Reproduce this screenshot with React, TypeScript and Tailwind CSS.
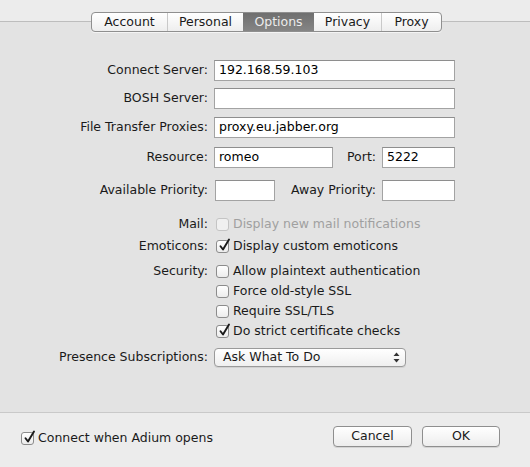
import React from 'react';

const font = { fontFamily: '"Lucida Grande", "DejaVu Sans", sans-serif' };

function Check({ checked = false, disabled = false }: { checked?: boolean; disabled?: boolean }) {
  return (
    <span
      className={`relative inline-block w-[13px] h-[13px] rounded-[3px] border shrink-0 ${
        disabled ? 'border-[#c4c4c4] bg-[#f0f0f0]' : 'border-[#8c8c8c] bg-gradient-to-b from-[#ffffff] to-[#ececec]'
      }`}
    >
      {checked && (
        <svg className="absolute left-[1px] top-[-3px]" width="13" height="14" viewBox="0 0 13 14">
          <path d="M2.5 8.2 L5 11.5 L11 1.5" fill="none" stroke="#1a1a1a" strokeWidth="1.9" strokeLinecap="round" strokeLinejoin="round" />
        </svg>
      )}
    </span>
  );
}

function Field({ value = '', w }: { value?: string; w: string }) {
  return (
    <div className={`${w} h-[21px] bg-white border border-[#a3a3a3] border-t-[#8e8e8e] flex items-center pl-[4px] text-[12.5px] text-black`}>
      {value}
    </div>
  );
}

function Label({ children }: { children?: React.ReactNode }) {
  return <div className="w-[214px] shrink-0 text-right pr-[6px] text-[12.5px] text-[#1a1a1a]">{children}</div>;
}

function CheckRow({ label, text, checked, disabled, cls }: { label?: string; text: string; checked?: boolean; disabled?: boolean; cls: string }) {
  return (
    <div className={`flex items-center h-[20px] ${cls}`}>
      <Label>{label}</Label>
      <div className="flex items-center gap-[4px] pl-[2px]">
        <Check checked={checked} disabled={disabled} />
        <span className={`text-[12.5px] ${disabled ? 'text-[#a0a0a0]' : 'text-[#1a1a1a]'}`}>{text}</span>
      </div>
    </div>
  );
}

const tabs = ['Account', 'Personal', 'Options', 'Privacy', 'Proxy'];
const tabW = ['w-[75px]', 'w-[76px]', 'w-[71px]', 'w-[67px]', 'w-[60px]'];

export default function App() {
  return (
    <div className="w-[530px] h-[467px] bg-[#ececec] flex flex-col overflow-hidden select-none" style={font}>
      <div className="relative h-[22px] shrink-0 border-b border-[#bdbdbd]">
        <div className="absolute left-[91px] top-[12px] h-[20px] flex rounded-[4px] border border-[#8f8f8f] overflow-hidden bg-gradient-to-b from-[#ffffff] to-[#eeeeee] shadow-[0_1px_0_rgba(255,255,255,0.6)]">
          {tabs.map((t, i) => (
            <div
              key={t}
              className={`${tabW[i]} flex items-center justify-center text-[12.5px] ${
                t === 'Options'
                  ? 'bg-gradient-to-b from-[#6f6f6f] to-[#858585] text-[#ececec]'
                  : 'text-[#1a1a1a]'
              } ${i > 0 && t !== 'Options' && tabs[i - 1] !== 'Options' ? 'border-l border-[#c9c9c9]' : ''}`}
            >
              {t}
            </div>
          ))}
        </div>
      </div>

      <div className="h-[391px] shrink-0 bg-[#e3e3e3] border-b border-[#c9c9c9] flex flex-col">
        <div className="flex items-center mt-[38px]">
          <Label>Connect Server:</Label>
          <Field value="192.168.59.103" w="w-[241px]" />
        </div>
        <div className="flex items-center mt-[7px]">
          <Label>BOSH Server:</Label>
          <Field w="w-[241px]" />
        </div>
        <div className="flex items-center mt-[8px]">
          <Label>File Transfer Proxies:</Label>
          <Field value="proxy.eu.jabber.org" w="w-[241px]" />
        </div>
        <div className="flex items-center mt-[9px]">
          <Label>Resource:</Label>
          <Field value="romeo" w="w-[119px]" />
          <div className="w-[49px] text-right pr-[6px] text-[12.5px] text-[#1a1a1a]">Port:</div>
          <Field value="5222" w="w-[73px]" />
        </div>
        <div className="flex items-center mt-[12px]">
          <Label>Available Priority:</Label>
          <div className="ml-[1px]"><Field w="w-[60px]" /></div>
          <div className="w-[107px] text-right pr-[6px] text-[12.5px] text-[#1a1a1a]">Away Priority:</div>
          <Field w="w-[73px]" />
        </div>

        <CheckRow cls="mt-[13px]" label="Mail:" text="Display new mail notifications" disabled />
        <CheckRow cls="mt-[2px]" label="Emoticons:" text="Display custom emoticons" checked />
        <CheckRow cls="mt-[5px]" label="Security:" text="Allow plaintext authentication" />
        <CheckRow cls="" text="Force old-style SSL" />
        <CheckRow cls="" text="Require SSL/TLS" />
        <CheckRow cls="" text="Do strict certificate checks" checked />

        <div className="flex items-center mt-[7px]">
          <Label>Presence Subscriptions:</Label>
          <div className="w-[192px] h-[19px] rounded-[4px] border border-[#9a9a9a] bg-gradient-to-b from-[#ffffff] to-[#efefef] flex items-center justify-between pl-[8px] pr-[5px] text-[12.5px] text-[#1a1a1a] shadow-[0_1px_0_rgba(0,0,0,0.08)]">
            <span>Ask What To Do</span>
            <svg width="7" height="11" viewBox="0 0 7 11">
              <path d="M3.5 0.5 L6.5 4 L0.5 4 Z" fill="#333" />
              <path d="M3.5 10.5 L6.5 7 L0.5 7 Z" fill="#333" />
            </svg>
          </div>
        </div>
      </div>

      <div className="flex-1 flex items-start pt-[13px]">
        <div className="flex items-center gap-[4px] ml-[21px] mt-[3px]">
          <Check checked />
          <span className="text-[12.5px] text-[#1a1a1a]">Connect when Adium opens</span>
        </div>
        <div className="ml-auto mr-[30px] flex gap-[10px]">
          <button className="w-[79px] h-[21px] rounded-[4px] border border-[#8f8f8f] bg-gradient-to-b from-[#ffffff] to-[#ededed] text-[12.5px] text-[#1a1a1a] shadow-[0_1px_0_rgba(0,0,0,0.1)]">
            Cancel
          </button>
          <button className="w-[78px] h-[21px] rounded-[4px] border border-[#8f8f8f] bg-gradient-to-b from-[#ffffff] to-[#ededed] text-[12.5px] text-[#1a1a1a] shadow-[0_1px_0_rgba(0,0,0,0.1)]">
            OK
          </button>
        </div>
      </div>
    </div>
  );
}
